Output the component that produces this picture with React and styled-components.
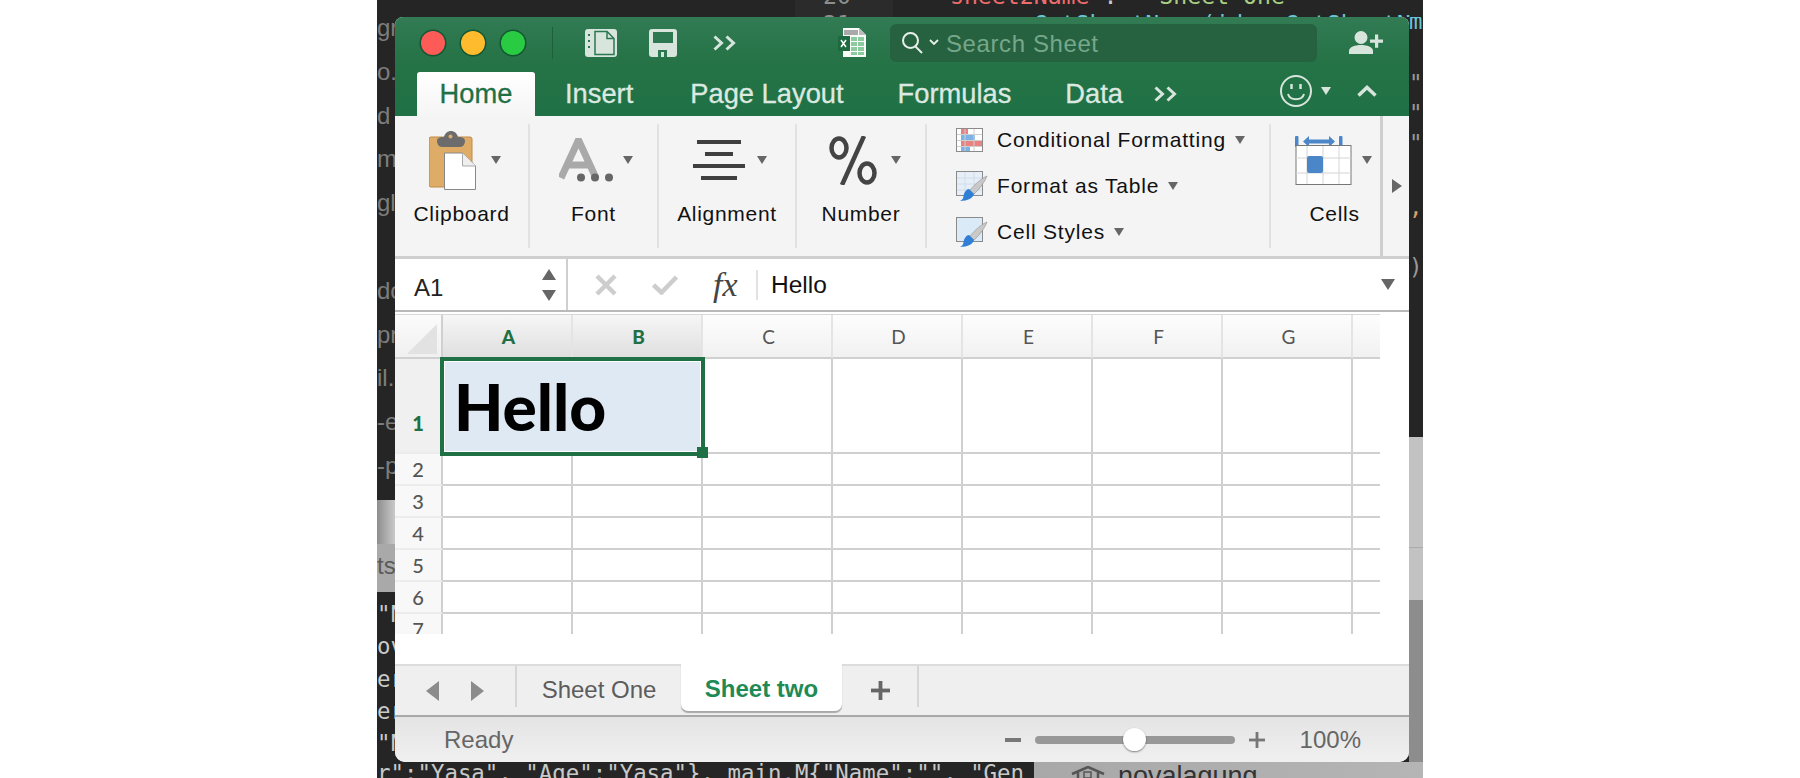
import React from 'react';
import styled, { createGlobalStyle } from 'styled-components';

const Global = createGlobalStyle`
  html, body { margin: 0; padding: 0; background: #fff; }
  body { font-family: "Liberation Sans", Arial, sans-serif; overflow: hidden; }
`;

const Page = styled.div`
  width: 1800px;
  height: 778px;
  display: flex;
  justify-content: center;
`;

const Desktop = styled.div`
  width: 1046px;
  height: 778px;
  display: grid;
  grid-template-columns: 18px 1014px 14px;
  grid-template-rows: 17px 745px 16px;
  overflow: hidden;
  background: #252525;
`;

/* what is left of the desktop around the window */
const TopBand = styled.div`
  grid-column: 1 / 4;
  display: flex;
  overflow: hidden;
  font: 23.2px/28px "DejaVu Sans Mono", monospace;
  white-space: pre;
  background: linear-gradient(90deg, #252525 0 418px, #2b2b2b 418px 516px, #252525 516px);
`;

const GutterNumbers = styled.div`
  margin: -18px 0 0 446px;
  color: #8d8d8d;
`;

const CodeLines = styled.div`
  margin: -18px 0 0 99px;
`;

const Token = styled.span`
  color: ${p => p.$color};
`;

const LeftStrip = styled.div`
  display: flex;
  flex-direction: column;
  overflow: hidden;
`;

const StripPart = styled.div`
  flex: none;
  height: ${p => p.$h}px;
  background: ${p => p.$bg};
  color: ${p => p.$fg || '#7d7d7d'};
  padding-top: ${p => p.$pad || 0}px;
  box-sizing: border-box;
  overflow: hidden;
  white-space: pre;
  ${p => p.$line && 'border-bottom: 1px solid #aaa;'}
`;

const StripLines = styled.div`
  margin-top: -11px;
`;

const StripLine = styled.div`
  height: 43.8px;
  line-height: 43.8px;
  font-size: 24px;
`;

const StripCode = styled.div`
  height: 32.3px;
  font: 22.4px/32.3px "DejaVu Sans Mono", monospace;
  color: #c9c9c9;
`;

const RightStrip = styled.div`
  display: flex;
  flex-direction: column;
  overflow: hidden;
`;

const RightMark = styled.div`
  flex: none;
  height: ${p => p.$h}px;
  font: 22.4px/${p => p.$h}px "DejaVu Sans Mono", monospace;
  color: ${p => p.$color || '#999'};
  white-space: pre;
`;

const BottomBand = styled.div`
  grid-column: 1 / 4;
  display: flex;
  overflow: hidden;
`;

const BottomCode = styled.div`
  width: 657px;
  flex: none;
  background: #252525;
  color: #c9c9c9;
  font: 22.4px/14px "DejaVu Sans Mono", monospace;
  padding-top: 4px;
  white-space: pre;
  overflow: hidden;
`;

const BottomPanel = styled.div`
  flex: 1;
  background: linear-gradient(90deg, #a8a8a8, #b5b5b5);
  display: flex;
  gap: 13px;
  padding-left: 37px;
  color: #333;
  font-size: 27px;
  line-height: 20px;
  padding-top: 4px;
  overflow: hidden;
`;

/* excel window */
const Window = styled.div`
  display: flex;
  flex-direction: column;
  background: #fff;
  border-radius: 8px 8px 10px 10px;
  overflow: hidden;
`;

const Chrome = styled.div`
  background: linear-gradient(#327b54, #257347 45%, #1f7145);
`;

const TitleBar = styled.div`
  height: 51px;
  display: flex;
  align-items: center;
  padding-left: 26px;
`;

const Lights = styled.div`
  display: flex;
  gap: 16px;
`;

const Light = styled.span`
  width: 24px;
  height: 24px;
  box-sizing: border-box;
  border-radius: 50%;
  background: ${p => p.$color};
  box-shadow: 0 0 0 1.5px rgba(0, 60, 30, 0.55);
`;

const TitleDivider = styled.span`
  width: 1px;
  height: 32px;
  margin-left: 27px;
  background: #1c6039;
`;

const Slot = styled.span`
  display: flex;
  flex: none;
  margin-left: ${p => p.$left || 0}px;
`;

const SearchBox = styled.div`
  width: 427px;
  height: 38px;
  margin-left: 24px;
  padding-left: 12px;
  box-sizing: border-box;
  display: flex;
  align-items: center;
  border-radius: 6px;
  background: #26623f;
`;

const SearchText = styled.span`
  margin-left: 7px;
  padding-top: 3px;
  font-size: 24px;
  letter-spacing: 0.6px;
  color: #76a78b;
`;

const TabRow = styled.div`
  height: 48px;
  display: flex;
  align-items: flex-end;
  padding: 0 32px 0 22px;
`;

const HomeTab = styled.div`
  width: 118px;
  height: 44px;
  display: flex;
  align-items: center;
  justify-content: center;
  border-radius: 3px 3px 0 0;
  background: linear-gradient(#fff, #f5f5f5);
  color: #1f7145;
  font-size: 27.3px;
  -webkit-text-stroke: 0.3px #1f7145;
`;

const RibbonTab = styled.div`
  height: 44px;
  display: flex;
  align-items: center;
  margin-left: ${p => p.$left}px;
  color: #dce9e1;
  font-size: 27.3px;
  -webkit-text-stroke: 0.3px #dce9e1;
`;

const TabRight = styled.div`
  margin-left: auto;
  height: 44px;
  display: flex;
  align-items: center;
  transform: translateY(-3px);
`;

const Ribbon = styled.div`
  height: 140px;
  flex: none;
  display: flex;
  background: #f4f4f4;
`;

const Group = styled.div`
  width: ${p => p.$w}px;
  height: 124px;
  margin-top: 8px;
  flex: none;
  box-sizing: border-box;
  display: flex;
  flex-direction: column;
  align-items: center;
  border-right: ${p => (p.$last ? 'none' : '2px solid #e2e2e2')};
`;

const IconRow = styled.div`
  height: 72px;
  align-self: flex-start;
  display: flex;
  align-items: center;
  padding-left: ${p => p.$left}px;
`;

const GroupLabel = styled.div`
  margin-top: 4px;
  line-height: 28px;
  font-size: 21px;
  letter-spacing: 0.7px;
  color: #111;
  transform: translateX(${p => p.$shift || 0}px);
`;

const Caret = styled.span`
  flex: none;
  width: 0;
  height: 0;
  margin-left: ${p => p.$left || 0}px;
  border-left: ${p => p.$size || 5}px solid transparent;
  border-right: ${p => p.$size || 5}px solid transparent;
  border-top: ${p => (p.$size ? p.$size * 1.6 : 8)}px solid ${p => p.$color || '#666'};
`;

const StylesGroup = styled.div`
  width: 344px;
  height: 124px;
  margin-top: 8px;
  flex: none;
  box-sizing: border-box;
  padding-left: 29px;
  display: flex;
  flex-direction: column;
  justify-content: center;
  border-right: 2px solid #e2e2e2;
`;

const StyleRow = styled.div`
  height: 46px;
  flex: none;
  display: flex;
  align-items: center;
  font-size: 21px;
  letter-spacing: 0.8px;
  color: #111;
`;

const StyleIcon = styled.span`
  width: 41px;
  flex: none;
  display: flex;
`;

const RibbonScroll = styled.div`
  flex: 1;
  display: flex;
  align-items: center;
  padding-left: 9px;
  border-left: 3px solid #cfcfcf;
`;

const ArrowRight = styled.span`
  flex: none;
  width: 0;
  height: 0;
  border-top: ${p => p.$size}px solid transparent;
  border-bottom: ${p => p.$size}px solid transparent;
  border-left: ${p => p.$len}px solid ${p => p.$color};
`;

const ArrowLeft = styled(ArrowRight)`
  border-left: none;
  border-right: ${p => p.$len}px solid ${p => p.$color};
`;

const FormulaBar = styled.div`
  height: 56px;
  flex: none;
  box-sizing: border-box;
  display: flex;
  border-top: 3px solid #cfcfcf;
  border-bottom: 2px solid #b9b9b9;
  background: #fff;
`;

const NameBox = styled.div`
  width: 173px;
  flex: none;
  box-sizing: border-box;
  display: flex;
  align-items: center;
  justify-content: space-between;
  padding: 6px 10px 0 19px;
  border-right: 2px solid #cfcfcf;
  font-size: 24px;
  color: #222;
`;

const Stepper = styled.div`
  display: flex;
  flex-direction: column;
  gap: 10px;
  margin-top: -6px;
`;

const StepTriangle = styled.span`
  width: 0;
  height: 0;
  border-left: 7px solid transparent;
  border-right: 7px solid transparent;
  ${p => (p.$up ? 'border-bottom: 11px solid #666;' : 'border-top: 11px solid #666;')}
`;

const FormulaRest = styled.div`
  flex: 1;
  display: flex;
  align-items: center;
  padding: 0 10px 0 27px;
`;

const FxMark = styled.span`
  width: 30px;
  margin-left: 35px;
  font: italic 34px/1 "Liberation Serif", serif;
  color: #444;
`;

const FormulaDivider = styled.span`
  width: 2px;
  height: 30px;
  margin-left: 13px;
  background: #e2e2e2;
`;

const FormulaValue = styled.span`
  margin-left: 13px;
  font-size: 24.5px;
  color: #111;
`;

const GridArea = styled.div`
  height: 352px;
  flex: none;
  box-sizing: border-box;
  padding-top: 2px;
  background: #fff;
`;

const Sheet = styled.div`
  width: 985px;
  height: 319px;
  border-top: 1px solid #d8d8d8;
  overflow: hidden;
  display: grid;
  grid-template-columns: 48px repeat(7, 130px) 27px;
  grid-template-rows: 44px 95px repeat(6, 32px);
  font-family: Lato, sans-serif;
`;

const Corner = styled.div`
  box-sizing: border-box;
  padding: 9px 0 0 12px;
  border-right: 2px solid #d0d0d0;
  border-bottom: 2px solid #d0d0d0;
  background: linear-gradient(#fbfbfb, #f0f0f0);
`;

const ColHead = styled.div`
  box-sizing: border-box;
  display: flex;
  align-items: center;
  justify-content: center;
  padding-left: 3px;
  font-size: 19px;
  font-weight: ${p => (p.$active ? 900 : 400)};
  color: ${p => (p.$active ? '#1f7145' : '#555')};
  border-right: ${p => (p.$end ? 'none' : '2px solid #e4e4e4')};
  border-bottom: 2px solid #d0d0d0;
  background: ${p => (p.$active
    ? 'linear-gradient(#f6f6f6, #dfdfdf)'
    : 'linear-gradient(#fdfdfd, #f1f1f1)')};
`;

const RowHead = styled.div`
  box-sizing: border-box;
  display: flex;
  align-items: ${p => (p.$active ? 'flex-end' : 'center')};
  justify-content: center;
  padding-bottom: ${p => (p.$active ? 17 : 0)}px;
  font-size: 20px;
  font-weight: ${p => (p.$active ? 900 : 500)};
  color: ${p => (p.$active ? '#1f7145' : '#555')};
  border-right: 2px solid #d0d0d0;
  border-bottom: 2px solid #ececec;
  background: ${p => (p.$active ? '#f0f0f0' : '#f8f8f8')};
`;

const Cell = styled.div`
  box-sizing: border-box;
  border-right: ${p => (p.$end ? 'none' : '2px solid #d0d0d0')};
  border-bottom: 2px solid #d0d0d0;
`;

const MergedCell = styled.div`
  grid-column: span 2;
  position: relative;
  z-index: 1;
  display: flex;
  align-items: center;
  box-sizing: border-box;
  padding-left: 11px;
  background: #dfe9f4;
  font-size: 64px;
  line-height: 1;
  font-weight: 900;
  color: #000;
`;

const Selection = styled.div`
  position: absolute;
  top: -2px;
  left: -3px;
  right: -2px;
  bottom: -2px;
  border: 4px solid #1f7145;
  box-shadow: inset 0 0 0 1px #fff;
`;

const Handle = styled.span`
  position: absolute;
  right: -7px;
  bottom: -6px;
  width: 11px;
  height: 11px;
  background: #1f7145;
`;

const BlankBelow = styled.div`
  flex: 1;
`;

const SheetBar = styled.div`
  height: 53px;
  flex: none;
  box-sizing: border-box;
  display: flex;
  border-top: 2px solid #dcdcdc;
  border-bottom: 2px solid #a9a9a9;
  background: #efefef;
`;

const SheetNav = styled.div`
  width: 122px;
  height: 41px;
  flex: none;
  box-sizing: border-box;
  display: flex;
  align-items: center;
  gap: 32px;
  padding: 8px 0 0 31px;
  border-right: 2px solid #d6d6d6;
`;

const SheetTab = styled.div`
  width: 164px;
  height: 47px;
  flex: none;
  display: flex;
  align-items: center;
  justify-content: center;
  box-sizing: border-box;
  font-size: 24px;
  color: #5c5c5c;
`;

const ActiveSheetTab = styled(SheetTab)`
  width: 161px;
  margin-top: -2px;
  padding-top: 2px;
  background: #fff;
  border-radius: 0 0 7px 7px;
  box-shadow: 0 1.5px 1px #a8a8a8;
  color: #1e8a55;
  font-weight: 700;
`;

const AddSheet = styled.div`
  width: 77px;
  height: 41px;
  flex: none;
  box-sizing: border-box;
  display: flex;
  align-items: center;
  padding: 8px 0 0 29px;
  border-right: 2px solid #d6d6d6;
`;

const StatusBar = styled.div`
  flex: 1;
  display: flex;
  align-items: center;
  padding: 0 48px 0 49px;
  background: linear-gradient(#e4e4e4, #f0f0f0);
  color: #666;
  font-size: 24px;
`;

const Zoomer = styled.div`
  margin-left: auto;
  display: flex;
  align-items: center;
  gap: 14px;
`;

const ZoomTrack = styled.div`
  width: 200px;
  height: 8px;
  display: flex;
  align-items: center;
  justify-content: center;
  border-radius: 4px;
  background: #989898;
`;

const ZoomThumb = styled.span`
  flex: none;
  width: 23px;
  height: 23px;
  border-radius: 50%;
  background: #fff;
  box-shadow: 0 1px 2px rgba(0, 0, 0, 0.45);
`;

const ZoomMinus = styled.span`
  width: 16px;
  height: 4px;
  background: #777;
`;

const ZoomValue = styled.span`
  margin-left: 35px;
`;

const LIGHT = '#d7e5dd';

const SidebarIcon = () => (
  <svg width="32" height="28" viewBox="0 0 32 28">
    <rect width="32" height="28" rx="3" fill={LIGHT} />
    <path d="M4 5v2M4 11v2M4 17v2" stroke="#2b7750" strokeWidth="2" />
    <path d="M10 2.5h12l7 7v16H10z" fill="none" stroke="#2b7750" strokeWidth="1.5" />
    <path d="M22 2.5v7h7" fill="none" stroke="#2b7750" strokeWidth="1.5" />
  </svg>
);

const SaveIcon = () => (
  <svg width="28" height="28" viewBox="0 0 28 28">
    <path d="M3 0h22a3 3 0 0 1 3 3v22a3 3 0 0 1-3 3H3a3 3 0 0 1-3-3V3a3 3 0 0 1 3-3z" fill={LIGHT} />
    <rect x="4" y="3" width="20" height="11" fill="#2c7850" />
    <rect x="9" y="21" width="9" height="7" fill="#2c7850" />
    <rect x="12" y="23" width="3" height="5" fill={LIGHT} />
  </svg>
);

const DoubleChevron = () => (
  <svg width="24" height="16" viewBox="0 0 24 16" fill="none" stroke={LIGHT} strokeWidth="3">
    <path d="M1.5 1.5 8.5 8l-7 6.5M13.5 1.5 20.5 8l-7 6.5" />
  </svg>
);

const ExcelIcon = () => (
  <svg width="28" height="29" viewBox="0 0 28 29">
    <path d="M5 0h16l7 7v22H5z" fill="#fbfbfb" />
    <path d="M21 0v7h7" fill="#bbb" />
    <rect x="6" y="2" width="14" height="5" fill="#a9a9a9" />
    <g fill="#8ccb9f">
      <rect x="13" y="9" width="6" height="4" /><rect x="20" y="9" width="6" height="4" />
      <rect x="13" y="14" width="6" height="4" /><rect x="20" y="14" width="6" height="4" />
      <rect x="13" y="19" width="6" height="4" /><rect x="20" y="19" width="6" height="4" />
      <rect x="13" y="24" width="6" height="3" /><rect x="20" y="24" width="6" height="3" />
    </g>
    <rect y="8" width="12" height="15" fill="#1d6a40" />
    <path d="M3 12l5 7M8 12l-5 7" stroke="#fff" strokeWidth="1.5" />
  </svg>
);

const SearchGlass = () => (
  <svg width="21" height="22" viewBox="0 0 21 22" fill="none" stroke="#e6efe9" strokeWidth="2">
    <circle cx="8.5" cy="8.5" r="7.5" />
    <path d="M13.5 14.5 20 21" />
  </svg>
);

const SmallChevron = () => (
  <Slot $left={6}>
    <svg width="10" height="7" viewBox="0 0 10 7" fill="none" stroke="#e6efe9" strokeWidth="1.8">
      <path d="M1 1l4 4 4-4" />
    </svg>
  </Slot>
);

const PersonPlus = () => (
  <svg width="34" height="23" viewBox="0 0 34 23" fill={LIGHT}>
    <circle cx="12" cy="6.500" r="6.500" />
    <path d="M0 23v-3c0-4 6-6 12-6s12 2 12 6v3z" />
    <path d="M21 8.500h5v-5h3.200v5H34v3.200h-4.800v5H26v-5h-5z" />
  </svg>
);

const Smiley = () => (
  <svg width="32" height="32" viewBox="0 0 32 32" fill="none" stroke={LIGHT} strokeWidth="2">
    <circle cx="16" cy="16" r="15" />
    <path d="M8 19c2 7 14 7 16 0" />
    <path d="M11.500 9v5M20.500 9v5" strokeWidth="2.500" />
  </svg>
);

const ChevronUp = () => (
  <svg width="20" height="12" viewBox="0 0 20 12" fill="none" stroke={LIGHT} strokeWidth="3.500">
    <path d="M1.500 10.500 10 2.500l8.500 8" />
  </svg>
);

const ClipboardIcon = () => (
  <svg width="47" height="59" viewBox="0 0 47 59">
    <rect y="6" width="43" height="50" rx="2" fill="#dfac68" stroke="#c08a44" />
    <path d="M8 10c0-3 3-4 6-4h1c1-4 4-6 7-6s6 2 7 6h1c3 0 6 1 6 4 0 3-2 6-5 6H13c-3 0-5-3-5-6z" fill="#6c6c6c" />
    <circle cx="21.500" cy="5.500" r="2" fill="#dfac68" />
    <path d="M15.500 22h18l13 13v23.500h-31z" fill="#fff" stroke="#888" />
    <path d="M33.500 22v13h13" fill="#eee" stroke="#aaa" />
  </svg>
);

const FontIcon = () => (
  <svg width="54" height="44" viewBox="0 0 54 44">
    <path d="M2 40 19.500 2l17.500 38M9 27h21" fill="none" stroke="#a9a9a9" strokeWidth="7" />
    <circle cx="22" cy="39.500" r="4" fill="#666" />
    <circle cx="36" cy="39.500" r="4" fill="#666" />
    <circle cx="50" cy="39.500" r="4" fill="#666" />
  </svg>
);

const AlignIcon = () => (
  <svg width="52" height="40" viewBox="0 0 52 40" fill="#3f3f3f">
    <rect x="4" width="44" height="4" />
    <rect x="12" y="12" width="28" height="4" />
    <rect y="24" width="52" height="4" />
    <rect x="8" y="36" width="36" height="4" />
  </svg>
);

const PercentIcon = () => (
  <svg width="48" height="49" viewBox="0 0 48 49" fill="none" stroke="#444" strokeWidth="4.500">
    <ellipse cx="10" cy="12" rx="7.500" ry="9.500" />
    <ellipse cx="38" cy="37" rx="7.500" ry="9.500" />
    <path d="M35 0 13 49" />
  </svg>
);

const MiniGrid = ({ children }) => (
  <svg width="27" height="24" viewBox="0 0 27 24">
    <rect x="0.500" y="0.500" width="26" height="23" fill="#fff" stroke="#8b8b8b" />
    {children}
    <path d="M9 .5v23M18 .5v23M.5 6.500h26M.5 12.500h26M.5 18.500h26" stroke="#cfcfcf" fill="none" />
    <rect x="0.500" y="0.500" width="26" height="23" fill="none" stroke="#8b8b8b" />
  </svg>
);

const CondIcon = () => (
  <MiniGrid>
    <rect x="5" y="1" width="7" height="5" fill="#e98383" />
    <rect x="5" y="7" width="14" height="5" fill="#7db2e6" />
    <rect x="5" y="12" width="21" height="6" fill="#e98383" />
    <rect x="5" y="18" width="9" height="5" fill="#7db2e6" />
  </MiniGrid>
);

const BrushIcon = ({ fill, lines }) => (
  <svg width="32" height="31" viewBox="0 0 32 31">
    <rect x="0.500" y="0.500" width="26" height="24" fill="#fff" stroke="#8b8b8b" />
    <rect x="1" y="1" width="25" height="23" fill={fill} />
    {lines && <path d="M9 1v23M18 1v23M1 7h25M1 13h25M1 19h25" stroke="#cfdceb" fill="none" />}
    <path d="M31 5C29 10 24 18 18 23l-4-4C19 13 26 7 31 5z" fill="#c9c9c9" stroke="#9a9a9a" strokeWidth="0.700" />
    <path d="M13 18l5 5c-1 4-6 7-14 7 4-2 3-4 4-7 1-3 3-5 5-5z" fill="#2f7fd6" />
  </svg>
);

const CellsIcon = () => (
  <svg width="57" height="49" viewBox="0 0 57 49">
    <rect x="0" y="0" width="3.500" height="11" rx="1" fill="#4a86c8" />
    <rect x="44" y="0" width="3.500" height="11" rx="1" fill="#4a86c8" />
    <path d="M8 5.500 14 0v3.500h20V0l6 5.500-6 5.500V7.500H14V11z" fill="#4a86c8" />
    <rect x="1" y="9.500" width="55" height="39" fill="#fff" stroke="#777" />
    <path d="M12 10v38M28 10v38M44 10v38M1 22h55M1 37h55" stroke="#d4d4d4" />
    <rect x="12" y="20" width="16" height="17" rx="2" fill="#4a86c8" />
  </svg>
);

const CancelMark = () => (
  <svg width="22" height="22" viewBox="0 0 22 22" fill="none" stroke="#cdcdcd" strokeWidth="4.500">
    <path d="M2 2l18 18M20 2 2 20" />
  </svg>
);

const CheckMark = () => (
  <Slot $left={35}>
    <svg width="26" height="20" viewBox="0 0 26 20" fill="none" stroke="#cdcdcd" strokeWidth="4.500">
      <path d="M1.500 10 9.500 17.500 24.500 2" />
    </svg>
  </Slot>
);

const PlusMark = ({ size, bar, color }) => (
  <svg width={size} height={size} viewBox="0 0 20 20" fill={color}>
    <rect x={10 - bar / 2} width={bar} height="20" />
    <rect y={10 - bar / 2} width="20" height={bar} />
  </svg>
);

const HouseIcon = () => (
  <svg width="34" height="16" viewBox="0 0 34 16" fill="none" stroke="#555" strokeWidth="2.500">
    <path d="M1 8 17 1l16 7M7 6v12M27 6v12" />
    <rect x="13" y="6" width="7" height="6" strokeWidth="1.500" />
  </svg>
);

const COLUMNS = ['A', 'B', 'C', 'D', 'E', 'F', 'G'];
const LEFT_LINES = ['gra', 'o.', 'd', 'mc', 'gl', '', 'do', 'pre', 'il.', '-e', '-p'];
const LEFT_CODE = ['"N', 'ov', 'er', 'er', '"N'];

const BlankCells = ({ start, row }) => (
  <>
    {COLUMNS.slice(start).map(c => <Cell key={`${c}${row}`} />)}
    <Cell $end />
  </>
);

const App = () => (
  <Page>
    <Global />
    <Desktop>
      <TopBand>
        <GutterNumbers>20{'\n'}21</GutterNumbers>
        <CodeLines>
          <Token $color="#f16c6c">sheet2Name</Token>
          <Token $color="#ccc"> := </Token>
          <Token $color="#a9cf82">{'"Sheet One"'}</Token>
          {'\n'}
          <Token $color="#ccc"> x  </Token>
          <Token $color="#6cc5d8">{'  GetSheetName(idx, GetSheetNam'}</Token>
        </CodeLines>
      </TopBand>

      <LeftStrip>
        <StripPart $h={483} $bg="#252525">
          <StripLines>
            {LEFT_LINES.map((l, i) => <StripLine key={i}>{l}</StripLine>)}
          </StripLines>
        </StripPart>
        <StripPart $h={44} $bg="linear-gradient(90deg, #8d8d8d, #c9c9c9)" />
        <StripPart $h={48} $bg="#a9a9a9" $fg="#5a5a5a">
          <StripLine>ts</StripLine>
        </StripPart>
        <StripPart $h={170} $bg="#252525" $pad={6}>
          {LEFT_CODE.map((l, i) => <StripCode key={i}>{l}</StripCode>)}
        </StripPart>
      </LeftStrip>

      <Window>
        <Chrome>
          <TitleBar>
            <Lights>
              <Light $color="#fc5b57" />
              <Light $color="#ffbb2e" />
              <Light $color="#29cb42" />
            </Lights>
            <TitleDivider />
            <Slot $left={32}><SidebarIcon /></Slot>
            <Slot $left={32}><SaveIcon /></Slot>
            <Slot $left={36}><DoubleChevron /></Slot>
            <Slot $left={101}><ExcelIcon /></Slot>
            <SearchBox>
              <SearchGlass />
              <SmallChevron />
              <SearchText>Search Sheet</SearchText>
            </SearchBox>
            <Slot $left={32}><PersonPlus /></Slot>
          </TitleBar>
          <TabRow>
            <HomeTab>Home</HomeTab>
            <RibbonTab $left={30}>Insert</RibbonTab>
            <RibbonTab $left={57}>Page Layout</RibbonTab>
            <RibbonTab $left={54}>Formulas</RibbonTab>
            <RibbonTab $left={54}>Data</RibbonTab>
            <RibbonTab $left={31}><DoubleChevron /></RibbonTab>
            <TabRight>
              <Smiley />
              <Caret $left={9} $color={LIGHT} />
              <Slot $left={26}><ChevronUp /></Slot>
            </TabRight>
          </TabRow>
        </Chrome>

        <Ribbon>
          <Group $w={135}>
            <IconRow $left={34}><ClipboardIcon /><Caret $left={15} /></IconRow>
            <GroupLabel>Clipboard</GroupLabel>
          </Group>
          <Group $w={129}>
            <IconRow $left={29}><FontIcon /><Caret $left={10} /></IconRow>
            <GroupLabel>Font</GroupLabel>
          </Group>
          <Group $w={138}>
            <IconRow $left={34}><AlignIcon /><Caret $left={12} /></IconRow>
            <GroupLabel>Alignment</GroupLabel>
          </Group>
          <Group $w={130}>
            <IconRow $left={32}><PercentIcon /><Caret $left={14} /></IconRow>
            <GroupLabel>Number</GroupLabel>
          </Group>
          <StylesGroup>
            <StyleRow><StyleIcon><CondIcon /></StyleIcon>Conditional Formatting<Caret $left={9} /></StyleRow>
            <StyleRow><StyleIcon><BrushIcon fill="#e6eff8" lines /></StyleIcon>Format as Table<Caret $left={9} /></StyleRow>
            <StyleRow><StyleIcon><BrushIcon fill="#dbeaf7" /></StyleIcon>Cell Styles<Caret $left={9} /></StyleRow>
          </StylesGroup>
          <Group $w={109} $last>
            <IconRow $left={24}><CellsIcon /><Caret $left={10} /></IconRow>
            <GroupLabel $shift={9}>Cells</GroupLabel>
          </Group>
          <RibbonScroll><ArrowRight $size={7} $len={10} $color="#666" /></RibbonScroll>
        </Ribbon>

        <FormulaBar>
          <NameBox>
            A1
            <Stepper><StepTriangle $up /><StepTriangle /></Stepper>
          </NameBox>
          <FormulaRest>
            <CancelMark />
            <CheckMark />
            <FxMark>fx</FxMark>
            <FormulaDivider />
            <FormulaValue>Hello</FormulaValue>
            <Caret $left={554} $size={7} />
          </FormulaRest>
        </FormulaBar>

        <GridArea>
          <Sheet>
            <Corner>
              <svg width="30" height="30" viewBox="0 0 30 30"><path d="M30 0v30H0z" fill="#e2e2e2" /></svg>
            </Corner>
            {COLUMNS.map((c, i) => <ColHead key={c} $active={i < 2}>{c}</ColHead>)}
            <ColHead $end />

            <RowHead $active>1</RowHead>
            <MergedCell>
              Hello
              <Selection><Handle /></Selection>
            </MergedCell>
            <BlankCells start={2} row={1} />

            {[2, 3, 4, 5, 6, 7].map(n => (
              <React.Fragment key={n}>
                <RowHead>{n}</RowHead>
                <BlankCells start={0} row={n} />
              </React.Fragment>
            ))}
          </Sheet>
          <BlankBelow />
        </GridArea>

        <SheetBar>
          <SheetNav>
            <ArrowLeft $size={10} $len={13} $color="#8b8b8b" />
            <ArrowRight $size={10} $len={13} $color="#8b8b8b" />
          </SheetNav>
          <SheetTab>Sheet One</SheetTab>
          <ActiveSheetTab>Sheet two</ActiveSheetTab>
          <AddSheet><PlusMark size={19} bar={4} color="#666" /></AddSheet>
        </SheetBar>

        <StatusBar>
          Ready
          <Zoomer>
            <ZoomMinus />
            <ZoomTrack><ZoomThumb /></ZoomTrack>
            <PlusMark size={16} bar={3.500} color="#777" />
          </Zoomer>
          <ZoomValue>100%</ZoomValue>
        </StatusBar>
      </Window>

      <RightStrip>
        <RightMark $h={8} $color="#6cc5d8">m</RightMark>
        <RightMark $h={43} />
        <RightMark $h={30}>"</RightMark>
        <RightMark $h={30}>"</RightMark>
        <RightMark $h={30}>"</RightMark>
        <RightMark $h={34} />
        <RightMark $h={30} $color="#d9a066">,</RightMark>
        <RightMark $h={30} />
        <RightMark $h={30}>)</RightMark>
        <RightMark $h={155} />
        <StripPart $h={111} $bg="#c2c2c2" $line />
        <StripPart $h={52} $bg="#c2c2c2" />
        <StripPart $h={162} $bg="#8d8d8d" />
      </RightStrip>

      <BottomBand>
        <BottomCode>{'r":"Yasa", "Age":"Yasa"}, main.M{"Name":"", "Gen'}</BottomCode>
        <BottomPanel><HouseIcon />novalagung</BottomPanel>
      </BottomBand>
    </Desktop>
  </Page>
);

export default App;
